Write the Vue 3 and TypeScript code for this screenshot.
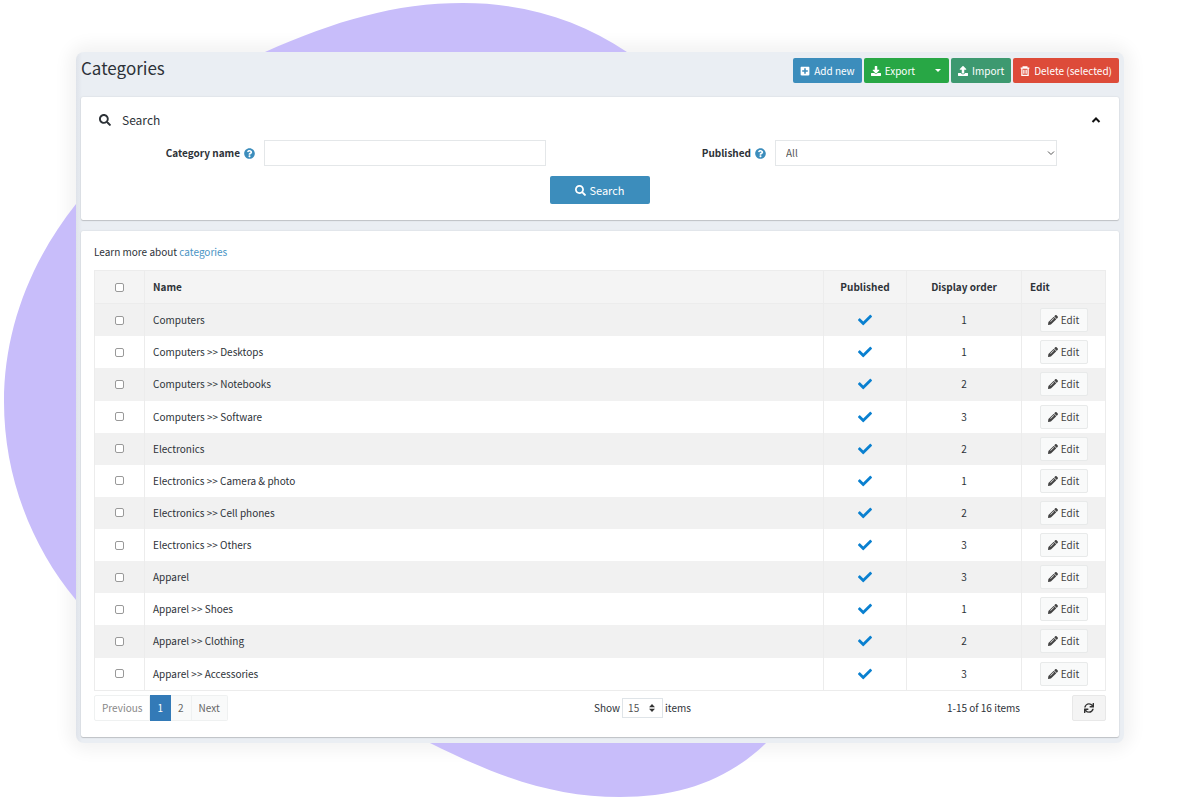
<script setup lang="ts">
import { computed, ref } from 'vue'

interface Category {
  name: string
  order: number
  selected: boolean
}

const rows: [string, number][] = [
  ['Computers', 1],
  ['Computers >> Desktops', 1],
  ['Computers >> Notebooks', 2],
  ['Computers >> Software', 3],
  ['Electronics', 2],
  ['Electronics >> Camera & photo', 1],
  ['Electronics >> Cell phones', 2],
  ['Electronics >> Others', 3],
  ['Apparel', 3],
  ['Apparel >> Shoes', 1],
  ['Apparel >> Clothing', 2],
  ['Apparel >> Accessories', 3],
]

const categories = ref<Category[]>(rows.map(([name, order]) => ({ name, order, selected: false })))
const categoryName = ref('')
const published = ref('All')
const pageSize = ref('15')
const expanded = ref(true)

const allSelected = computed({
  get: () => categories.value.every((c) => c.selected),
  set: (value: boolean) => categories.value.forEach((c) => (c.selected = value)),
})

const icons = {
  search:
    'M505 442.7L405.3 343c-4.5-4.5-10.6-7-17-7H372c27.6-35.3 44-79.7 44-128C416 93.1 322.9 0 208 0S0 93.1 0 208s93.1 208 208 208c48.3 0 92.7-16.4 128-44v16.3c0 6.4 2.5 12.5 7 17l99.7 99.7c9.4 9.4 24.6 9.4 33.9 0l28.3-28.3c9.4-9.4 9.4-24.6.1-34zM208 336c-70.7 0-128-57.2-128-128 0-70.7 57.2-128 128-128 70.7 0 128 57.2 128 128 0 70.7-57.2 128-128 128z',
  plus: 'M432 32H80C53.500 32 32 53.500 32 80v352c0 26.500 21.500 48 48 48h352c26.500 0 48-21.500 48-48V80c0-26.500-21.500-48-48-48zm-32 252c0 6.600-5.400 12-12 12h-92v92c0 6.600-5.400 12-12 12h-56c-6.600 0-12-5.400-12-12v-92h-92c-6.600 0-12-5.400-12-12v-56c0-6.600 5.400-12 12-12h92v-92c0-6.600 5.400-12 12-12h56c6.600 0 12 5.400 12 12v92h92c6.600 0 12 5.400 12 12v56z',
  download:
    'M216 0h80c13.300 0 24 10.700 24 24v168h87.700c17.800 0 26.700 21.500 14.100 34.100L269.700 378.300c-7.500 7.500-19.800 7.500-27.300 0L90.100 226.100c-12.600-12.600-3.700-34.100 14.100-34.100H192V24c0-13.300 10.700-24 24-24zm296 376v112c0 13.300-10.700 24-24 24H24c-13.300 0-24-10.700-24-24V376c0-13.300 10.700-24 24-24h146.700l49 49c20.100 20.100 52.500 20.100 72.600 0l49-49H488c13.300 0 24 10.700 24 24z',
  upload:
    'M296 384h-80c-13.300 0-24-10.700-24-24V192h-87.700c-17.800 0-26.700-21.500-14.100-34.100L242.300 5.700c7.500-7.500 19.800-7.500 27.300 0l152.200 152.200c12.600 12.600 3.700 34.100-14.100 34.100H320v168c0 13.300-10.700 24-24 24zm216-8v112c0 13.300-10.700 24-24 24H24c-13.300 0-24-10.700-24-24V376c0-13.300 10.700-24 24-24h136v8c0 30.900 25.100 56 56 56h80c30.900 0 56-25.100 56-56v-8h136c13.300 0 24 10.700 24 24z',
  help: 'M504 256c0 137-111 248-248 248S8 393 8 256C8 119 119 8 256 8s248 111 248 248zM262.700 90c-54.500 0-89.300 23-116.600 63.800-3.500 5.300-2.400 12.400 2.700 16.200l34.700 26.300c5.200 4 12.600 3 16.700-2.100 17.800-22.700 30.100-35.800 57.300-35.800 20.400 0 45.700 13.100 45.700 33 0 15-12.400 22.600-32.600 33.900C247.100 238.500 216 254.900 216 296v4c0 6.600 5.400 12 12 12h56c6.600 0 12-5.400 12-12v-1.300c0-28.500 83.200-29.700 83.200-106.700 0-58-60.200-102-116.500-102zM256 338c-25.400 0-46 20.600-46 46s20.600 46 46 46 46-20.600 46-46-20.600-46-46-46z',
  check:
    'M173.900 439.400L7.500 273c-10-10-10-26.200 0-36.200l36.200-36.200c10-10 26.200-10 36.200 0L192 312.700 432.100 72.600c10-10 26.200-10 36.200 0l36.200 36.200c10 10 10 26.200 0 36.200L210.100 439.400c-10 10-26.200 10-36.200 0z',
  pencil:
    'M497.900 142.100l-46.100 46.100c-4.700 4.700-12.300 4.700-17 0l-111-111c-4.700-4.700-4.700-12.300 0-17l46.100-46.100c18.700-18.700 49.100-18.700 67.900 0l60.100 60.100c18.800 18.700 18.800 49.100 0 67.900zM284.200 99.800L21.600 362.400.4 483.900c-2.900 16.400 11.400 30.600 27.800 27.800l121.500-21.300 262.600-262.600c4.700-4.700 4.700-12.300 0-17l-111-111c-4.800-4.700-12.400-4.700-17.100 0zM124.100 339.900c-5.500-5.500-5.500-14.300 0-19.800l154-154c5.500-5.500 14.300-5.500 19.800 0s5.500 14.300 0 19.800l-154 154c-5.500 5.500-14.300 5.500-19.800 0z',
  sync: 'M440.650 12.570l4 82.770A247.160 247.160 0 0 0 255.830 8C134.730 8 33.910 94.920 12.290 209.820A12 12 0 0 0 24.090 224h49.050a12 12 0 0 0 11.670-9.260 175.910 175.910 0 0 1 317-56.940l-101.460-4.860a12 12 0 0 0-12.570 12v47.410a12 12 0 0 0 12 12H500a12 12 0 0 0 12-12V12a12 12 0 0 0-12-12h-47.370a12 12 0 0 0-11.980 12.570zM255.830 432a175.610 175.610 0 0 1-146-77.800l101.800 4.870a12 12 0 0 0 12.570-12v-47.400a12 12 0 0 0-12-12H12a12 12 0 0 0-12 12V500a12 12 0 0 0 12 12h47.350a12 12 0 0 0 12-12.600l-4.150-82.570A247.170 247.170 0 0 0 255.830 504c121.110 0 221.930-86.920 243.550-201.820a12 12 0 0 0-11.800-14.180h-49.050a12 12 0 0 0-11.670 9.260A175.860 175.860 0 0 1 255.830 432z',
}
</script>

<template>
  <div class="stage">
    <svg class="blob" viewBox="0 0 1200 800" aria-hidden="true">
      <path
        d="M265 52C335 21 395 3 463 3C525 3 580 20 627 52C900 240 940 520 766 743C728 780 680 797 620 797C555 797 500 778 430 743C300 690 180 720 76 600C30 545 4 474 4 402C4 330 30 262 76 204C130 130 190 85 265 52Z"
      />
    </svg>

    <main class="window">
      <header class="topbar">
        <h1>Categories</h1>
        <div class="actions">
          <button type="button" class="btn blue">
            <svg class="icon" viewBox="0 0 512 512"><path :d="icons.plus" /></svg>Add new
          </button>
          <div class="split">
            <button type="button" class="btn green">
              <svg class="icon" viewBox="0 0 512 512"><path :d="icons.download" /></svg>Export
            </button>
            <button type="button" class="btn green toggle" aria-label="Export options">
              <svg class="caret" viewBox="0 0 6 3"><path d="M0 0h6L3 3z" /></svg>
            </button>
          </div>
          <button type="button" class="btn teal">
            <svg class="icon" viewBox="0 0 512 512"><path :d="icons.upload" /></svg>Import
          </button>
          <button type="button" class="btn red">
            <svg class="icon outline" viewBox="0 0 16 16">
              <path d="M1 3.500h14M5 3V1.200h6V3M3 4v10.800h10V4M6.200 6v6.500M9.800 6v6.500" />
            </svg>Delete (selected)
          </button>
        </div>
      </header>

      <section class="card search">
        <div class="search-head">
          <svg class="icon large" viewBox="0 0 512 512"><path :d="icons.search" /></svg>
          <h2>Search</h2>
          <button type="button" class="collapse" aria-label="Toggle search" @click="expanded = !expanded">
            <svg viewBox="0 0 10 8"><path d="M1.500 6L5 2.500 8.500 6" /></svg>
          </button>
        </div>
        <form v-show="expanded" @submit.prevent>
          <div class="fields">
            <label for="category-name">
              Category name
              <svg class="icon help" viewBox="0 0 512 512"><path :d="icons.help" /></svg>
            </label>
            <input id="category-name" v-model="categoryName" type="text" class="control" />
            <label for="published">
              Published
              <svg class="icon help" viewBox="0 0 512 512"><path :d="icons.help" /></svg>
            </label>
            <div class="select">
              <select id="published" v-model="published" class="control">
                <option>All</option>
              </select>
              <svg class="arrow" viewBox="0 0 8 6"><path d="M1 1.500l3 3 3-3" /></svg>
            </div>
          </div>
          <button type="submit" class="btn blue submit">
            <svg class="icon" viewBox="0 0 512 512"><path :d="icons.search" /></svg>Search
          </button>
        </form>
      </section>

      <section class="card list">
        <p>Learn more about <a href="#">categories</a></p>
        <table>
          <colgroup>
            <col class="c-check" />
            <col />
            <col class="c-published" />
            <col class="c-order" />
            <col class="c-edit" />
          </colgroup>
          <thead>
            <tr>
              <th class="center"><input v-model="allSelected" type="checkbox" aria-label="Select all" /></th>
              <th>Name</th>
              <th class="center">Published</th>
              <th class="center">Display order</th>
              <th>Edit</th>
            </tr>
          </thead>
          <tbody>
            <tr v-for="category in categories" :key="category.name">
              <td class="center">
                <input v-model="category.selected" type="checkbox" :aria-label="category.name" />
              </td>
              <td>{{ category.name }}</td>
              <td class="center">
                <svg class="check" viewBox="0 0 512 512"><path :d="icons.check" /></svg>
              </td>
              <td class="center">{{ category.order }}</td>
              <td class="center">
                <button type="button" class="edit">
                  <svg class="icon" viewBox="0 0 512 512"><path fill-rule="evenodd" :d="icons.pencil" /></svg>Edit
                </button>
              </td>
            </tr>
          </tbody>
        </table>

        <footer>
          <nav class="pager">
            <button type="button" class="previous">Previous</button>
            <button type="button" class="current">1</button>
            <button type="button">2</button>
            <button type="button">Next</button>
          </nav>
          <div class="summary">
            <label class="length">
              Show
              <span class="select">
                <select v-model="pageSize">
                  <option>15</option>
                </select>
                <svg class="sorter" viewBox="0 0 6 8"><path d="M0 3.300h6L3 0zM0 4.700h6L3 8z" /></svg>
              </span>
              items
            </label>
            <span>1-15 of 16 items</span>
          </div>
          <button type="button" class="refresh" aria-label="Refresh">
            <svg class="icon" viewBox="0 0 512 512"><path :d="icons.sync" /></svg>
          </button>
        </footer>
      </section>
    </main>
  </div>
</template>

<style>
body {
  margin: 0;
  background: #fff;
}
</style>

<style scoped>
.stage {
  position: relative;
  isolation: isolate;
  box-sizing: border-box;
  min-height: 100vh;
  padding: 52px 76px 56px;
  overflow: hidden;
  color: #2d3238;
  font: 10px/16px "Noto Sans CJK SC", "Open Sans", sans-serif;
}

.blob {
  position: absolute;
  z-index: -1;
  top: 0;
  left: 0;
  width: 100%;
  fill: #c8bdfa;
}

.window {
  position: relative;
  padding: 0 5px 6px;
  border-radius: 8px;
  background: linear-gradient(90deg, #dfe3ea, #eaeef3 6px, #eaeef3);
}

/* The glow sits below the blob, so it shows on white only. */
.window::before {
  content: "";
  position: absolute;
  z-index: -2;
  inset: 0;
  border-radius: 12px;
  box-shadow: 0 0 16px 8px rgba(0, 0, 0, 0.05);
}

.icon {
  width: 10px;
  height: 10px;
  flex: none;
  fill: currentColor;
}

.outline {
  fill: none;
  stroke: currentColor;
  stroke-width: 2;
}

button,
input,
select {
  box-sizing: border-box;
  margin: 0;
  font: inherit;
  color: inherit;
}

button {
  cursor: pointer;
}

.topbar {
  display: flex;
  align-items: flex-start;
  justify-content: space-between;
  padding: 6px 0 14px;
}

h1 {
  margin: 0;
  font-size: 17px;
  font-weight: 400;
  line-height: 20px;
}

.actions,
.split {
  display: flex;
}

.actions {
  gap: 2px;
}

.btn {
  display: inline-flex;
  align-items: center;
  justify-content: center;
  gap: 4px;
  height: 25px;
  padding: 0 7px;
  border: 0;
  border-radius: 2px;
  color: #fff;
  white-space: nowrap;
}

.blue {
  background: #3c8dbc;
}

.green {
  background: #28a745;
}

.teal {
  background: #3d9970;
}

.red {
  background: #dd4b39;
}

.split .btn:first-child {
  padding-right: 12px;
  border-radius: 2px 0 0 2px;
}

.split .toggle {
  padding: 0 8px;
  border-radius: 0 2px 2px 0;
}

.caret {
  width: 6px;
  height: 3px;
  fill: currentColor;
}

.card {
  border-radius: 2px;
  background: #fff;
  box-shadow: 0 1px 1px rgba(0, 0, 0, 0.16), 0 0 2px rgba(0, 0, 0, 0.12);
}

.search {
  margin-bottom: 11px;
  padding: 13px 8px 16px;
}

.search-head {
  display: flex;
  align-items: center;
  padding: 0 10px;
}

.large {
  width: 12px;
  height: 12px;
}

h2 {
  flex: 1;
  margin: 0 0 0 11px;
  font-size: 12px;
  font-weight: 400;
  line-height: 20px;
}

.collapse {
  display: flex;
  padding: 0;
  border: 0;
  background: none;
}

.collapse svg {
  width: 10px;
  height: 8px;
  fill: none;
  stroke: #111;
  stroke-width: 2;
}

form {
  display: flex;
  flex-direction: column;
  align-items: center;
  gap: 10px;
  padding-top: 10px;
}

.fields {
  display: grid;
  grid-template-columns: 175fr 282fr 229fr 282fr 54fr;
  align-self: stretch;
  align-items: center;
}

.fields label {
  display: flex;
  align-items: center;
  justify-content: flex-end;
  gap: 4px;
  padding-right: 9px;
  font-weight: 700;
}

.help {
  width: 11px;
  height: 11px;
  fill: #3c8dbc;
}

.control {
  width: 100%;
  height: 26px;
  padding: 0 10px;
  border: 1px solid #e4e7e9;
  border-radius: 0;
  background: #fff;
  color: #555;
}

.select {
  position: relative;
  display: block;
}

.select select {
  display: block;
  appearance: none;
}

.arrow {
  position: absolute;
  top: 10px;
  right: 2px;
  width: 8px;
  height: 6px;
  fill: none;
  stroke: #555;
  stroke-width: 1;
}

.submit {
  min-width: 100px;
  height: 28px;
  gap: 3px;
  font-size: 11px;
}

.submit .icon {
  width: 11px;
  height: 11px;
}

.list {
  padding: 13px 13px 16px;
}

p {
  margin: 0 0 10px;
}

a {
  color: #4a94c4;
  text-decoration: none;
}

table {
  width: 100%;
  height: 421px;
  border-collapse: collapse;
  table-layout: fixed;
}

.c-check {
  width: 50px;
}

.c-published {
  width: 83px;
}

.c-order {
  width: 115px;
}

.c-edit {
  width: 84px;
}

th,
td {
  padding: 0 8px;
  border: 1px solid #ececec;
  border-width: 0 1px;
  text-align: left;
}

thead tr {
  border: 1px solid #ececec;
  background: #f4f4f4;
}

tbody tr:nth-child(odd) {
  background: #f1f1f1;
}

tbody tr:last-child {
  border-bottom: 1px solid #ececec;
}

th {
  height: 32px;
  font-weight: 700;
}

.center {
  text-align: center;
}

input[type="checkbox"] {
  display: block;
  width: 9px;
  height: 9px;
  margin: 0 auto;
  border: 1px solid #999;
  border-radius: 2px;
  background: #fff;
  appearance: none;
}

input[type="checkbox"]:checked {
  background: #3c8dbc;
}

.check {
  display: block;
  width: 14px;
  height: 14px;
  margin: 0 auto;
  fill: #0a80d0;
}

.edit {
  display: flex;
  align-items: center;
  justify-content: center;
  gap: 3px;
  width: 48px;
  height: 24px;
  margin: 0 auto;
  padding: 0;
  border: 1px solid #e8eaea;
  border-radius: 2px;
  background: #f9fafa;
  color: #444;
}

footer {
  display: grid;
  grid-template-columns: 54fr 46fr auto;
  align-items: center;
  padding-top: 4px;
}

.pager {
  display: flex;
}

.pager button {
  height: 26px;
  padding: 0 7px;
  border: 1px solid #eff1f1;
  border-left-width: 0;
  background: #f9fafa;
  color: #666;
}

.pager .previous {
  border-left-width: 1px;
  border-radius: 2px 0 0 2px;
  background: #fff;
  color: #888;
}

.pager .current {
  border-color: #337ab7;
  background: #337ab7;
  color: #fff;
}

.pager button:last-child {
  border-radius: 0 2px 2px 0;
}

.summary {
  display: flex;
  align-items: center;
  justify-content: space-between;
}

.length {
  display: flex;
  align-items: center;
  gap: 2px;
}

.length select {
  width: 41px;
  height: 20px;
  padding: 0 5px;
  border: 1px solid #dfe4e8;
  border-radius: 0;
  background: #fff;
  color: #555;
}

.sorter {
  position: absolute;
  top: 6px;
  right: 8px;
  width: 6px;
  height: 8px;
  fill: #333;
}

.refresh {
  display: flex;
  align-items: center;
  justify-content: center;
  width: 34px;
  height: 26px;
  margin-left: 52px;
  padding: 0;
  border: 1px solid #e8e8e8;
  border-radius: 2px;
  background: #f4f4f4;
  color: #333;
}
</style>
